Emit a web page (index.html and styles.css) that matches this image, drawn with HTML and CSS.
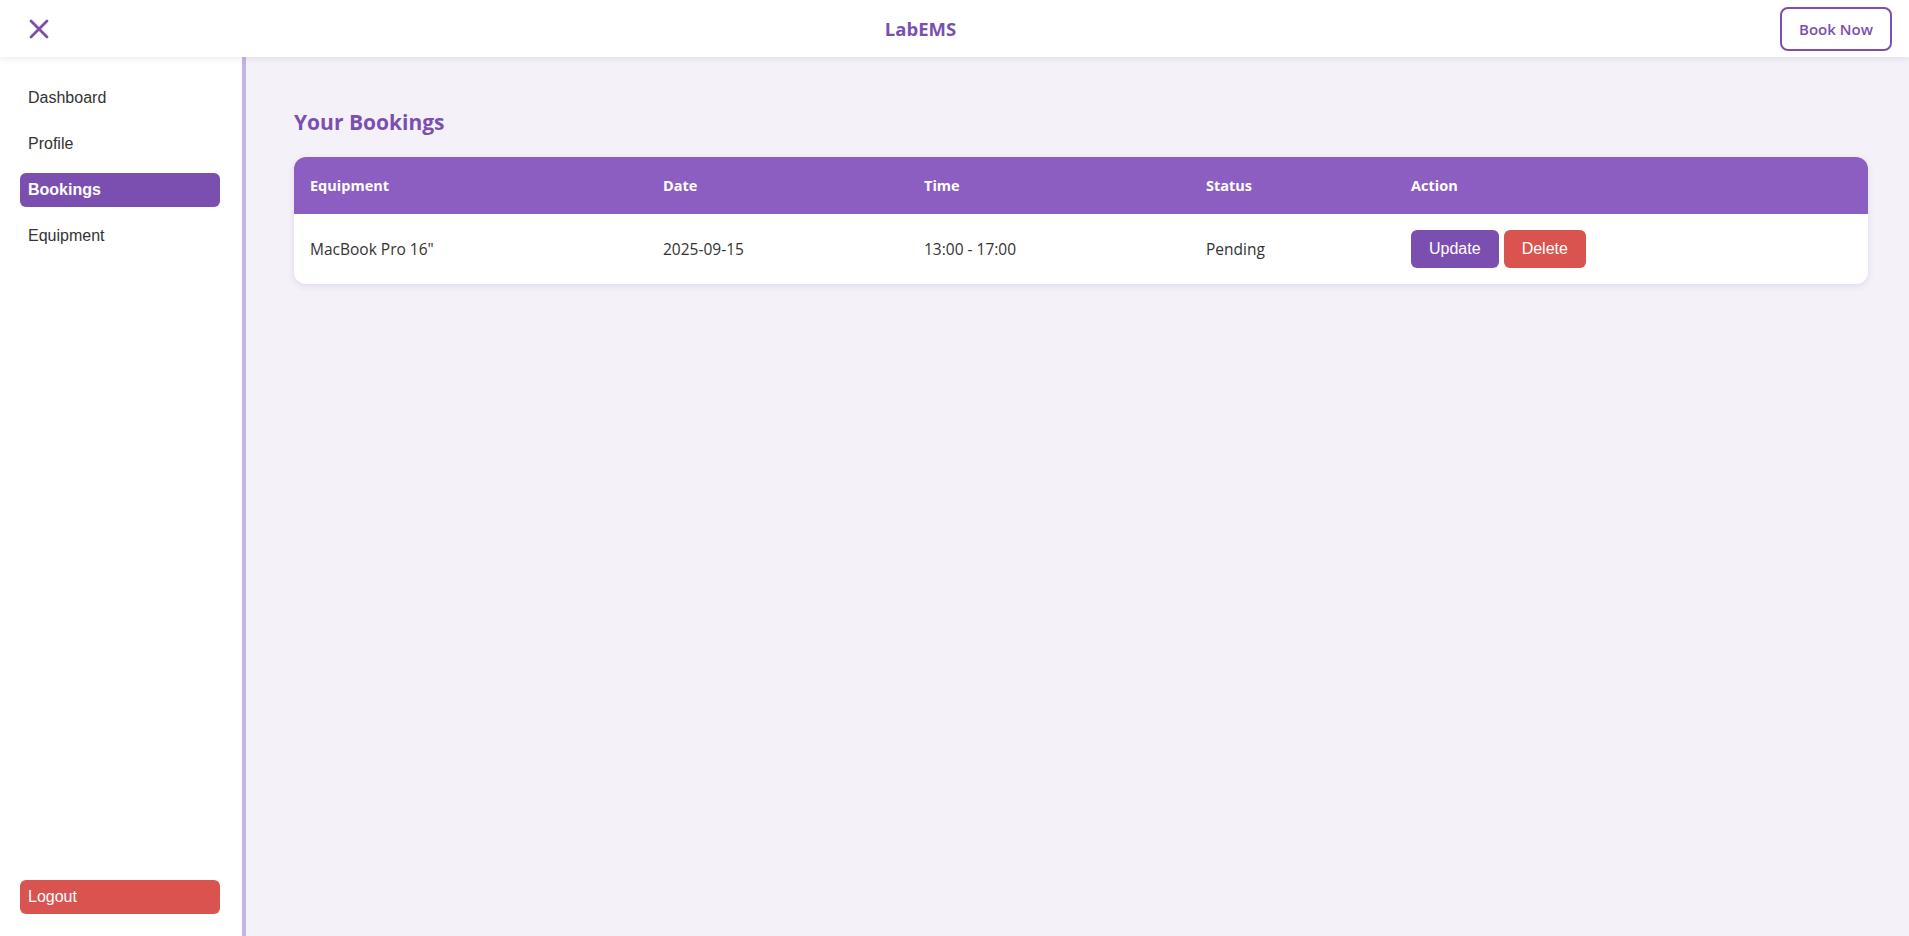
FILE: index.html
```html
<!DOCTYPE html>
<html lang="en">
<head>
<meta charset="utf-8">
<title>LabEMS</title>
<link rel="stylesheet" href="styles.css">
</head>
<body>
<div class="app">
  <header class="topbar">
    <button class="close-btn" aria-label="Close menu">
      <svg width="20" height="20" viewBox="0 0 20 20"><path d="M2 2 L18 18 M18 2 L2 18" stroke="#7b4fb0" stroke-width="2.8" stroke-linecap="round" fill="none"/></svg>
    </button>
    <div class="brand">LabEMS</div>
    <button class="book-btn">Book Now</button>
  </header>
  <div class="body">
    <aside class="sidebar">
      <nav class="nav">
        <a class="nav-item">Dashboard</a>
        <a class="nav-item">Profile</a>
        <a class="nav-item active">Bookings</a>
        <a class="nav-item">Equipment</a>
      </nav>
      <a class="logout">Logout</a>
    </aside>
    <main class="main">
      <h2 class="title">Your Bookings</h2>
      <div class="card">
        <table class="table">
          <colgroup>
            <col class="c1"><col class="c2"><col class="c3"><col class="c4"><col class="c5">
          </colgroup>
          <thead>
            <tr><th>Equipment</th><th>Date</th><th>Time</th><th>Status</th><th>Action</th></tr>
          </thead>
          <tbody>
            <tr>
              <td>MacBook Pro 16"</td>
              <td>2025-09-15</td>
              <td>13:00 - 17:00</td>
              <td>Pending</td>
              <td><button class="btn btn-update">Update</button> <button class="btn btn-delete">Delete</button></td>
            </tr>
          </tbody>
        </table>
      </div>
    </main>
  </div>
</div>
</body>
</html>
```
FILE: styles.css
```css
* { box-sizing: border-box; }
html, body { margin: 0; padding: 0; height: 100%; }
body { font-family: "Open Sans", "Noto Sans", sans-serif; color: #333; background: #f4f1f8; }
.app { display: flex; flex-direction: column; height: 100vh; }
.topbar {
  height: 57px; flex: 0 0 57px; background: #fff;
  display: flex; align-items: center; justify-content: space-between;
  padding: 0 17px 0 18px;
  box-shadow: 0 2px 6px rgba(0,0,0,0.08);
  position: relative; z-index: 2;
}
.close-btn { background: none; border: none; padding: 0 0 0 11px; width: 43px; height: 40px; display: flex; align-items: center; cursor: pointer; }
.brand { color: #7b4fb0; font-weight: 700; font-size: 18.5px; }
.book-btn {
  height: 44px; width: 112px; border: 2px solid #7b4fb0; border-radius: 8px; background: #fff;
  color: #7b4fb0; font-family: "Open Sans", sans-serif; font-weight: 600; font-size: 15px; cursor: pointer; padding: 0;
}
.body { flex: 1; display: flex; min-height: 0; }
.sidebar {
  width: 246px; flex: 0 0 246px; background: #fff; border-right: 4px solid #c4b5e1;
  padding: 24px 22px 22px 20px; display: flex; flex-direction: column; justify-content: space-between;
}
.nav { display: flex; flex-direction: column; gap: 12px; }
.nav-item, .logout {
  display: block; height: 34px; line-height: 34px; padding: 0 8px; border-radius: 6px;
  font-family: "Liberation Sans", Arial, sans-serif; font-size: 16px; color: #333;
}
.nav-item.active { background: #7b4fb0; color: #fff; font-weight: 700; }
.logout { background: #d9534f; color: #fff; height: 34px; }
.main { flex: 1; padding: 0 41px 0 48px; }
.title { margin: 53px 0 22px; color: #7b4fb0; font-size: 21px; font-weight: 700; line-height: 25px; }
.card { background: #fff; border-radius: 12px; overflow: hidden; box-shadow: 0 2px 6px rgba(120,80,180,0.15); }
.table { width: 100%; border-collapse: collapse; table-layout: fixed; }
.c1 { width: 353px; } .c2 { width: 261px; } .c3 { width: 282px; } .c4 { width: 205px; } .c5 { width: auto; }
.table th { background: #8c5ec2; color: #fff; text-align: left; font-weight: 700; font-size: 14.5px; height: 57px; padding: 0 16px; }
.table td { height: 70px; padding: 0 16px; font-size: 15.5px; color: #333; }
.btn { height: 38px; padding: 0 18px; border: none; border-radius: 6px; color: #fff; font-family: "Liberation Sans", Arial, sans-serif; font-size: 16px; cursor: pointer; vertical-align: middle; }
.btn-update { background: #7b4fb0; }
.btn-delete { background: #d9534f; margin-left: 1px; }
```
